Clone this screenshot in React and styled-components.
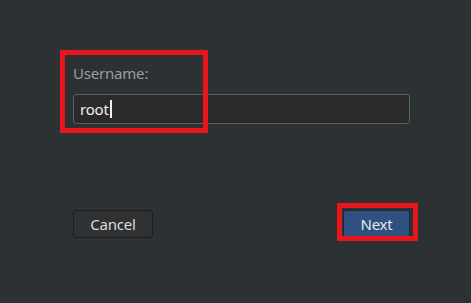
import React from "react";
import styled, { createGlobalStyle } from "styled-components";

const GlobalStyle = createGlobalStyle`
  html, body {
    margin: 0;
    padding: 0;
    background: #2c3133;
  }
  body {
    font-family: "Noto Sans", "Open Sans", sans-serif;
  }
`;

const Page = styled.div`
  position: relative;
  width: 471px;
  height: 303px;
  box-sizing: border-box;
  padding: 63px 61px 0 73px;
  display: flex;
  flex-direction: column;
  background: #2c3133;
`;

const Label = styled.div`
  font-size: 15px;
  line-height: 20px;
  letter-spacing: -0.2px;
  color: #9b9e9f;
`;

const Field = styled.div`
  margin-top: 11px;
  height: 30px;
  box-sizing: border-box;
  border: 1px solid #5d6061;
  border-radius: 3px;
  background: #2a2a2b;
  display: flex;
  align-items: center;
  padding-left: 6px;
  font-size: 15px;
  letter-spacing: -0.2px;
  color: #eeeeee;
`;

const Caret = styled.span`
  display: inline-block;
  width: 2px;
  height: 18px;
  margin-left: 1px;
  background: #f2f2f2;
`;

const Actions = styled.div`
  margin-top: 86px;
  display: flex;
  justify-content: space-between;
`;

const Button = styled.button`
  height: 28px;
  width: ${({ $w }) => $w}px;
  box-sizing: border-box;
  border-radius: 3px;
  font-family: "Noto Sans", "Open Sans", sans-serif;
  font-size: 15px;
  letter-spacing: -0.2px;
  padding: 0;
  border: 1px solid ${({ $primary }) => ($primary ? "#1a2a3e" : "#1b1c1d")};
  background: ${({ $primary }) => ($primary ? "#2e5180" : "#2f3133")};
  color: ${({ $primary }) => ($primary ? "#e4e9ef" : "#dcdcdc")};
`;

const Highlight = styled.div`
  position: absolute;
  box-sizing: border-box;
  border: 5px solid #e8151d;
  left: ${({ $x }) => $x}px;
  top: ${({ $y }) => $y}px;
  width: ${({ $w }) => $w}px;
  height: ${({ $h }) => $h}px;
`;

export default function App() {
  return (
    <>
      <GlobalStyle />
      <Page>
        <Label>Username:</Label>
        <Field>
          root
          <Caret />
        </Field>
        <Actions>
          <Button $w={80}>Cancel</Button>
          <Button $w={67} $primary>
            Next
          </Button>
        </Actions>
        <Highlight $x={60} $y={50} $w={148} $h={83} />
        <Highlight $x={337} $y={203} $w={81} $h={38} />
      </Page>
    </>
  );
}
